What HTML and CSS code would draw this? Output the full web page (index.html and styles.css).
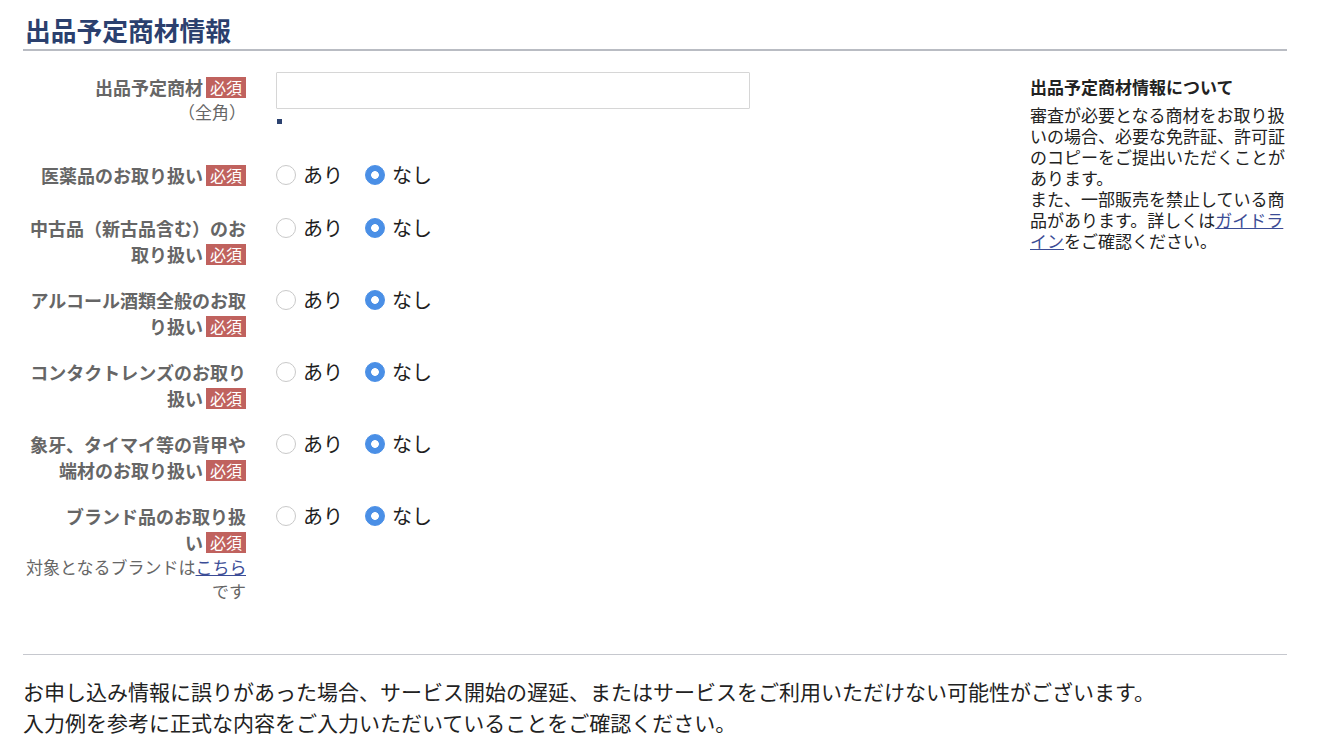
FILE: index.html
```html
<!DOCTYPE html>
<html lang="ja">
<head>
<meta charset="utf-8">
<title>出品予定商材情報</title>
<link rel="stylesheet" href="styles.css">
</head>
<body>
<div class="page">
  <h1 class="section-title">出品予定商材情報</h1>
  <div class="section-body">
    <div class="form">
      <div class="row row-first">
        <div class="label label-first">
          <span class="label-main">出品予定商<span class="nw">材<span class="req">必須</span></span></span>
          <span class="note">（全角）</span>
        </div>
        <div class="control">
          <input class="text-input" type="text">
          <div class="marker"></div>
        </div>
      </div>

      <div class="row">
        <div class="label"><span class="label-main">医薬品のお取り扱<span class="nw">い<span class="req">必須</span></span></span></div>
        <div class="control radios">
          <label class="opt"><input class="radio" type="radio" name="r1"><span>あり</span></label>
          <label class="opt"><input class="radio" type="radio" name="r1" checked><span>なし</span></label>
        </div>
      </div>

      <div class="row">
        <div class="label"><span class="label-main">中古品（新古品含む）のお取り扱<span class="nw">い<span class="req">必須</span></span></span></div>
        <div class="control radios">
          <label class="opt"><input class="radio" type="radio" name="r2"><span>あり</span></label>
          <label class="opt"><input class="radio" type="radio" name="r2" checked><span>なし</span></label>
        </div>
      </div>

      <div class="row">
        <div class="label"><span class="label-main">アルコール酒類全般のお取り扱<span class="nw">い<span class="req">必須</span></span></span></div>
        <div class="control radios">
          <label class="opt"><input class="radio" type="radio" name="r3"><span>あり</span></label>
          <label class="opt"><input class="radio" type="radio" name="r3" checked><span>なし</span></label>
        </div>
      </div>

      <div class="row">
        <div class="label"><span class="label-main">コンタクトレンズのお取り扱<span class="nw">い<span class="req">必須</span></span></span></div>
        <div class="control radios">
          <label class="opt"><input class="radio" type="radio" name="r4"><span>あり</span></label>
          <label class="opt"><input class="radio" type="radio" name="r4" checked><span>なし</span></label>
        </div>
      </div>

      <div class="row">
        <div class="label"><span class="label-main">象牙、タイマイ等の背甲や端材のお取り扱<span class="nw">い<span class="req">必須</span></span></span></div>
        <div class="control radios">
          <label class="opt"><input class="radio" type="radio" name="r5"><span>あり</span></label>
          <label class="opt"><input class="radio" type="radio" name="r5" checked><span>なし</span></label>
        </div>
      </div>

      <div class="row">
        <div class="label">
          <span class="label-main">ブランド品のお取り扱<span class="nw">い<span class="req">必須</span></span></span>
          <span class="note note-brand">対象となるブランドは<a href="#" class="link">こちら</a>です</span>
        </div>
        <div class="control radios">
          <label class="opt"><input class="radio" type="radio" name="r6"><span>あり</span></label>
          <label class="opt"><input class="radio" type="radio" name="r6" checked><span>なし</span></label>
        </div>
      </div>
    </div>

    <aside class="info">
      <h2 class="info-title">出品予定商材情報について</h2>
      <p class="info-text">審査が必要となる商材をお取り扱いの場合、必要な免許証、許可証のコピーをご提出いただくことがあります。<br>また、一部販売を禁止している商品があります。詳しくは<a href="#" class="link">ガイドライン</a>をご確認ください。</p>
    </aside>
  </div>

  <div class="notice">
    <p>お申し込み情報に誤りがあった場合、サービス開始の遅延、またはサービスをご利用いただけない可能性がございます。</p>
    <p>入力例を参考に正式な内容をご入力いただいていることをご確認ください。</p>
  </div>
</div>
</body>
</html>
```

FILE: styles.css
```css
* {
  box-sizing: border-box;
}

body {
  margin: 0;
  background: #ffffff;
  font-family: "Noto Sans CJK JP", "Noto Sans", sans-serif;
  color: #222222;
}

.page {
  width: 1264px;
  margin-left: 23px;
}

.section-title {
  margin: 0;
  padding: 15px 0 4px 2px;
  font-size: 25.75px;
  line-height: 30px;
  font-weight: 700;
  color: #2b406e;
  border-bottom: 2px solid #b9bcc3;
}

.section-body {
  display: flex;
  align-items: flex-start;
}

.form {
  flex: 1;
}

.row {
  display: flex;
  align-items: flex-start;
  gap: 30px;
  min-height: 53px;
  padding: 10px 0;
}

.row-first {
  padding-top: 21px;
  padding-bottom: 28px;
}

.label {
  width: 223px;
  flex: none;
  text-align: right;
}

.label-first {
  padding-top: 2px;
}

.label-main {
  display: block;
  font-size: 18px;
  line-height: 26px;
  font-weight: 700;
  color: #666666;
}

.nw {
  white-space: nowrap;
}

.req {
  display: inline-block;
  margin-left: 3px;
  padding: 0 4px;
  height: 21px;
  line-height: 21px;
  font-size: 16px;
  font-weight: 400;
  color: #ffffff;
  background: #c0625e;
  vertical-align: 1px;
}

.note {
  display: block;
  font-size: 17px;
  line-height: 24px;
  font-weight: 400;
  color: #666666;
}

.link {
  color: #3b4c96;
  text-decoration: underline;
}

.control {
  flex: 1;
}

.text-input {
  display: block;
  width: 474px;
  height: 37px;
  margin: 0;
  border: 1px solid #d6d6d6;
  border-radius: 1px;
  background: #ffffff;
  font-size: 16px;
}

.marker {
  width: 5px;
  height: 5px;
  margin-top: 10px;
  margin-left: 1px;
  background: #2c4270;
}

.radios {
  display: flex;
  align-items: center;
  gap: 22px;
  height: 26px;
}

.opt {
  display: inline-flex;
  align-items: center;
  gap: 7px;
  font-size: 20px;
  line-height: 26px;
  color: #1e1e1e;
}

.radio {
  appearance: none;
  -webkit-appearance: none;
  width: 20px;
  height: 20px;
  margin: 0;
  border: 1px solid #c9c9c9;
  border-radius: 50%;
  background: #ffffff;
}

.radio:checked {
  border-color: #4a8fe6;
  background: radial-gradient(circle, #ffffff 0 3.5px, #4a8fe6 4.2px);
}

.info {
  width: 257px;
  flex: none;
  margin-top: 25px;
}

.info-title {
  margin: 0 0 7px;
  font-size: 17px;
  line-height: 21px;
  font-weight: 700;
  color: #222222;
}

.info-text {
  margin: 0;
  font-size: 17px;
  line-height: 21px;
  color: #222222;
}

.notice {
  margin-top: 41px;
  padding-top: 21px;
  border-top: 1px solid #c6c8ce;
}

.notice p {
  margin: 0;
  font-size: 21px;
  line-height: 31px;
  color: #222222;
}
```
